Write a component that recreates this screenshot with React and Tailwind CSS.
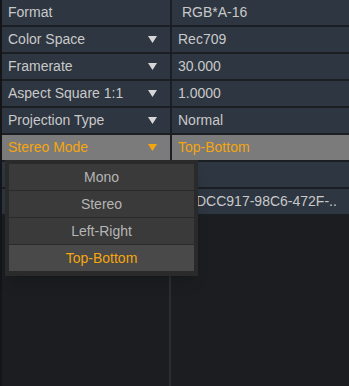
import React from 'react';

const rows = [
  { key: 'format', label: 'Format', value: 'RGB*A-16', arrow: false, valuePad: 'pl-[10px]' },
  { key: 'color', label: 'Color Space', value: 'Rec709', arrow: true },
  { key: 'fps', label: 'Framerate', value: '30.000', arrow: true },
  { key: 'aspect', label: 'Aspect Square 1:1', value: '1.0000', arrow: true },
  { key: 'proj', label: 'Projection Type', value: 'Normal', arrow: true },
  { key: 'stereo', label: 'Stereo Mode', value: 'Top-Bottom', arrow: true, active: true },
  // these two rows sit under the open dropdown
  { key: 'offset', label: '', value: '', arrow: false },
  { key: 'uuid', label: '', value: 'DCC917-98C6-472F-..', arrow: false, valuePad: 'pl-[24px]' },
];

const options = ['Mono', 'Stereo', 'Left-Right', 'Top-Bottom'];

const Arrow = ({ active }) => (
  <svg width="9" height="7" viewBox="0 0 9 7" className="mr-[13px]">
    <polygon points="0,0 9,0 4.5,7" fill={active ? '#f5a60f' : '#d6d6d6'} />
  </svg>
);

const App = () => {
  return (
    <div
      className="relative w-[349px] h-[386px] bg-[#1c1d21] flex overflow-hidden text-[14px]"
      style={{ fontFamily: '"Liberation Sans", Arial, sans-serif' }}
    >
      {/* left edge */}
      <div className="w-[2px] h-full bg-[#141518]" />

      <div className="flex-1 flex flex-col">
        {rows.map((row) => (
          <div key={row.key} className="flex h-[27px] border-b-2 border-[#1b1e23]">
            <div
              className={`w-[168px] flex items-center justify-between pl-[6px] ${
                row.active ? 'bg-[#7b7b7b] text-[#f5a60f]' : 'bg-[#2d3641] text-[#c9c9c9]'
              }`}
            >
              <span>{row.label}</span>
              {row.arrow && <Arrow active={row.active} />}
            </div>
            <div className="w-[2px] bg-[#1b1e23]" />
            <div
              className={`flex-1 flex items-center whitespace-nowrap ${row.valuePad || 'pl-[6px]'} ${
                row.active ? 'bg-[#7b7b7b] text-[#f5a60f]' : 'bg-[#2d3641] text-[#c9c9c9]'
              }`}
            >
              {row.value}
            </div>
          </div>
        ))}
        {/* empty area below the rows */}
        <div className="flex-1 flex">
          <div className="w-[167px]" />
          <div className="w-[2px] bg-[#2c2d31]" />
        </div>
      </div>

      {/* stereo mode dropdown */}
      <div className="absolute left-[5px] top-[160px] w-[193px] bg-[#2a2a2b] p-[4px] pb-[5px] flex flex-col gap-[1px] shadow-lg">
        {options.map((opt) => (
          <div
            key={opt}
            className={`h-[26px] flex items-center justify-center ${
              opt === 'Top-Bottom' ? 'bg-[#494949] text-[#f5a60f]' : 'bg-[#3a3a3a] text-[#b5b5b5]'
            }`}
          >
            {opt}
          </div>
        ))}
      </div>
    </div>
  );
};

export default App;
